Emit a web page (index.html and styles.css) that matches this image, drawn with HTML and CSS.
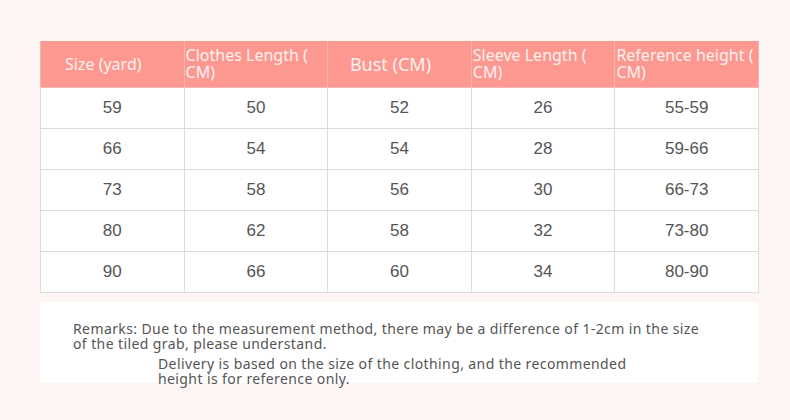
FILE: index.html
```html
<!DOCTYPE html>
<html>
<head>
<meta charset="utf-8">
<link rel="stylesheet" href="styles.css">
</head>
<body>
<div class="page">
  <table class="sizes">
    <thead>
      <tr>
        <th class="c">Size (yard)</th>
        <th class="l">Clothes Length (<br>CM)</th>
        <th class="c big">Bust (CM)</th>
        <th class="l">Sleeve Length (<br>CM)</th>
        <th class="l">Reference height (<br>CM)</th>
      </tr>
    </thead>
    <tbody>
      <tr><td>59</td><td>50</td><td>52</td><td>26</td><td>55-59</td></tr>
      <tr><td>66</td><td>54</td><td>54</td><td>28</td><td>59-66</td></tr>
      <tr><td>73</td><td>58</td><td>56</td><td>30</td><td>66-73</td></tr>
      <tr><td>80</td><td>62</td><td>58</td><td>32</td><td>73-80</td></tr>
      <tr><td>90</td><td>66</td><td>60</td><td>34</td><td>80-90</td></tr>
    </tbody>
  </table>
  <div class="remarks">
    <p class="r1">Remarks: Due to the measurement method, there may be a difference of 1-2cm in the size<br>of the tiled grab, please understand.</p>
    <p class="r2">Delivery is based on the size of the clothing, and the recommended<br>height is for reference only.</p>
  </div>
</div>
</body>
</html>
```
FILE: styles.css
```css
html, body {
  margin: 0;
  padding: 0;
  background: #fcf5f3;
}
.page {
  width: 790px;
  height: 420px;
  padding: 41px 0 0 40px;
  box-sizing: border-box;
}
.sizes {
  border-collapse: collapse;
  width: 719px;
  table-layout: fixed;
}
.sizes th {
  background: #fd9891;
  color: #fdf1ef;
  font-family: "Noto Sans", sans-serif;
  font-weight: normal;
  font-size: 16px;
  line-height: 17px;
  height: 46px;
  padding: 0;
  border: 1px solid #f3b6b1;
  border-top: none;
  vertical-align: middle;
}
.sizes th.c { text-align: center; padding-right: 18px; }
.sizes th.big { font-size: 18px; }
.sizes th.l { text-align: left; padding-left: 1px; }
.sizes td {
  background: #fff;
  color: #555;
  font-family: "Liberation Sans", Arial, sans-serif;
  font-size: 17px;
  text-align: center;
  height: 40px;
  padding: 0;
  border: 1px solid #dcdcdc;
}
.remarks {
  margin-top: 9px;
  width: 718px;
  height: 81px;
  background: #fff;
  box-sizing: border-box;
  padding: 19px 0 0 33px;
  font-family: "Noto Sans", sans-serif;
  font-size: 14px;
  line-height: 15px;
  letter-spacing: 0.4px;
  color: #555;
}
.remarks p { margin: 0; }
.remarks .r2 { margin: 5px 0 0 85px; }
```
